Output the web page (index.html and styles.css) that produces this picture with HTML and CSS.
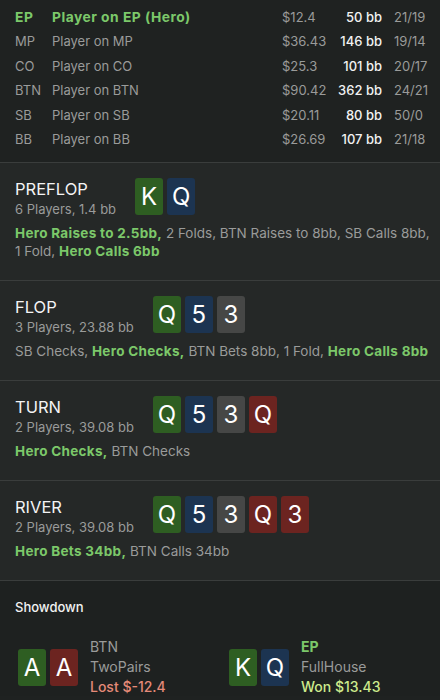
FILE: index.html
```html
<!DOCTYPE html>
<html lang="en">
<head>
  <meta charset="UTF-8" />
  <title>Hand History</title>
  <link rel="stylesheet" href="styles.css">
</head>
<body>

  <div class="players">
    <div class="player hero">
      <span class="pos">EP</span><span class="name">Player on EP (Hero)</span><span class="money">$12.4</span><span class="bb">50 bb</span><span class="ratio">21/19</span>
    </div>
    <div class="player">
      <span class="pos">MP</span><span class="name">Player on MP</span><span class="money">$36.43</span><span class="bb">146 bb</span><span class="ratio">19/14</span>
    </div>
    <div class="player">
      <span class="pos">CO</span><span class="name">Player on CO</span><span class="money">$25.3</span><span class="bb">101 bb</span><span class="ratio">20/17</span>
    </div>
    <div class="player">
      <span class="pos">BTN</span><span class="name">Player on BTN</span><span class="money">$90.42</span><span class="bb">362 bb</span><span class="ratio">24/21</span>
    </div>
    <div class="player">
      <span class="pos">SB</span><span class="name">Player on SB</span><span class="money">$20.11</span><span class="bb">80 bb</span><span class="ratio">50/0</span>
    </div>
    <div class="player">
      <span class="pos">BB</span><span class="name">Player on BB</span><span class="money">$26.69</span><span class="bb">107 bb</span><span class="ratio">21/18</span>
    </div>
  </div>

  <div class="street">
    <div class="street-head">
      <div class="street-info">
        <div class="street-name">PREFLOP</div>
        <div class="street-sub">6 Players, 1.4 bb</div>
      </div>
      <div class="cards">
        <span class="card green">K</span><span class="card blue">Q</span>
      </div>
    </div>
    <p class="actions"><b>Hero Raises to 2.5bb,</b> 2 Folds, BTN Raises to 8bb, SB Calls 8bb, 1 Fold, <b>Hero Calls 6bb</b></p>
  </div>

  <div class="street">
    <div class="street-head">
      <div class="street-info">
        <div class="street-name">FLOP</div>
        <div class="street-sub">3 Players, 23.88 bb</div>
      </div>
      <div class="cards">
        <span class="card green">Q</span><span class="card blue">5</span><span class="card grey">3</span>
      </div>
    </div>
    <p class="actions">SB Checks, <b>Hero Checks,</b> BTN Bets 8bb, 1 Fold, <b>Hero Calls 8bb</b></p>
  </div>

  <div class="street">
    <div class="street-head">
      <div class="street-info">
        <div class="street-name">TURN</div>
        <div class="street-sub">2 Players, 39.08 bb</div>
      </div>
      <div class="cards">
        <span class="card green">Q</span><span class="card blue">5</span><span class="card grey">3</span><span class="card red">Q</span>
      </div>
    </div>
    <p class="actions"><b>Hero Checks,</b> BTN Checks</p>
  </div>

  <div class="street">
    <div class="street-head">
      <div class="street-info">
        <div class="street-name">RIVER</div>
        <div class="street-sub">2 Players, 39.08 bb</div>
      </div>
      <div class="cards">
        <span class="card green">Q</span><span class="card blue">5</span><span class="card grey">3</span><span class="card red">Q</span><span class="card red">3</span>
      </div>
    </div>
    <p class="actions"><b>Hero Bets 34bb,</b> BTN Calls 34bb</p>
  </div>

  <div class="showdown">
    <div class="showdown-title">Showdown</div>
    <div class="hands">
      <div class="hand">
        <div class="cards">
          <span class="card green">A</span><span class="card red">A</span>
        </div>
        <div class="hand-info">
          <div>BTN</div>
          <div>TwoPairs</div>
          <div class="lost">Lost $-12.4</div>
        </div>
      </div>
      <div class="hand">
        <div class="cards">
          <span class="card green">K</span><span class="card blue">Q</span>
        </div>
        <div class="hand-info">
          <div class="hero-pos">EP</div>
          <div>FullHouse</div>
          <div class="won">Won $13.43</div>
        </div>
      </div>
    </div>
  </div>

</body>
</html>
```

FILE: styles.css
```css
body {
  margin: 0;
  background: #1f2221;
  font-family: Inter, "Noto Sans", sans-serif;
  font-size: 13px;
  color: #9a9b9a;
}

.players {
  padding: 5px 14px 11px 15px;
  border-bottom: 1px solid #3a3d3c;
}

.player {
  display: grid;
  grid-template-columns: 37px 1fr 56px 44px 44px;
  line-height: 24.4px;
}

.player .bb {
  text-align: right;
  color: #f2f2f2;
  font-weight: 500;
}

.player .ratio {
  padding-left: 12px;
}

.player.hero .pos,
.player.hero .name {
  color: #7cc86a;
  font-weight: 700;
  font-size: 13.8px;
  letter-spacing: 0.5px;
}

.street {
  background: #252827;
  padding: 15px 6px 20px 15px;
  border-bottom: 1px solid #3a3d3c;
}

.street-head {
  display: flex;
  align-items: flex-start;
  gap: 19px;
  height: 40px;
}

.street-name {
  font-size: 16.5px;
  line-height: 22px;
  color: #f4f4f4;
}

.street-sub {
  line-height: 18px;
}

.cards {
  display: flex;
  gap: 4px;
}

.card {
  width: 28px;
  height: 37px;
  border-radius: 3px;
  display: flex;
  align-items: center;
  justify-content: center;
  font-size: 24px;
  color: #fff;
}

.card.green { background: #2e5e22; }
.card.blue { background: #1c3451; }
.card.grey { background: #464746; }
.card.red { background: #6c2420; }

.actions {
  margin: 6px 0 0;
  font-size: 13.5px;
  line-height: 18px;
}

.actions b {
  color: #7cc86a;
  font-weight: 700;
  letter-spacing: 0.3px;
}

.showdown {
  background: #1e2120;
  padding: 17px 14px 0 15px;
  height: 115px;
  box-sizing: border-box;
}

.showdown-title {
  color: #f2f2f2;
  font-weight: 500;
  line-height: 18px;
}

.hands {
  display: flex;
  margin-top: 21px;
  padding-left: 3px;
}

.hand {
  display: flex;
  align-items: center;
  gap: 12px;
  width: 211px;
  flex-shrink: 0;
}

.hand-info {
  font-size: 14px;
  line-height: 20px;
}

.hero-pos {
  color: #7cc86a;
  font-weight: 700;
}

.lost {
  color: #e58a78;
  font-weight: 500;
}

.won {
  color: #cdea8c;
  font-weight: 500;
}
```
